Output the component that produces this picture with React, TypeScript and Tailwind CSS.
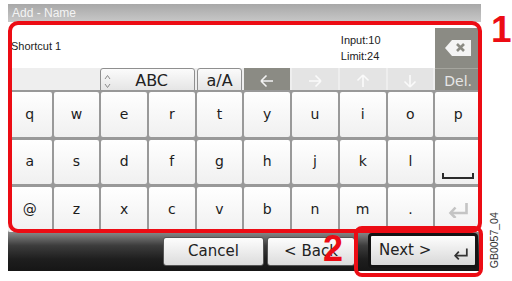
import React from "react";

const RED = "#ec0c14";

function Arrow({ dir, color }: { dir: "left" | "right" | "up" | "down"; color: string }) {
  const rot = { left: 0, right: 180, up: 90, down: 270 }[dir];
  return (
    <svg width="16" height="14" viewBox="0 0 16 14" style={{ transform: `rotate(${rot}deg)` }}>
      <path d="M2 7H14M2 7L7.5 1.5M2 7L7.5 12.5" stroke={color} strokeWidth="1.6" fill="none" />
    </svg>
  );
}

function EnterIcon({ w, h, color, sw }: { w: number; h: number; color: string; sw: number }) {
  return (
    <svg width={w} height={h} viewBox="0 0 22 16" fill="none">
      <path d="M19 1V11H3" stroke={color} strokeWidth={sw} />
      <path d="M8 5.5L3 11L8 16" stroke={color} strokeWidth={sw} />
    </svg>
  );
}

const rows = [
  ["q", "w", "e", "r", "t", "y", "u", "i", "o", "p"],
  ["a", "s", "d", "f", "g", "h", "j", "k", "l", "space"],
  ["@", "z", "x", "c", "v", "b", "n", "m", ".", "enter"],
];

const keyCls =
  "flex items-center justify-center rounded-[2px] bg-[linear-gradient(to_bottom,#ffffff,#f0f0f0)] text-[14px] text-[#1c1c1c]";

export default function App() {
  return (
    <div className="relative h-[281px] w-[512px] overflow-hidden bg-white font-['DejaVu_Sans',sans-serif]">
      <div className="ml-[8px] mt-[4px] flex h-[267px] w-[473px] flex-col">
        {/* title */}
        <div className="flex h-[18px] items-center bg-[linear-gradient(to_bottom,#a8a8a8,#c8c8c8)] pl-[4px] font-['Liberation_Sans',sans-serif] text-[12px] text-[#f4f4f4]">
          Add - Name
        </div>

        {/* input area */}
        <div className="grid h-[46px] grid-cols-[43.5px_repeat(9,1fr)] gap-x-[2px] bg-white font-['Liberation_Sans',sans-serif] text-[11px] text-[#222]">
          <div className="col-span-7 flex items-center pl-[3px] pt-[3px]">Shortcut 1</div>
          <div className="col-span-2 flex flex-col justify-center pl-[1px] pt-[6px] leading-[16px]">
            <span>Input:10</span>
            <span>Limit:24</span>
          </div>
          <div className="mt-[6px] flex items-center justify-center bg-[#8b8b84]">
            <svg width="26" height="16" viewBox="0 0 26 16">
              <path d="M7 0H26V16H7L0 8Z" fill="#f4f4f4" />
              <path d="M12 4L19 11M19 4L12 11" stroke="#8b8b84" strokeWidth="2.6" />
            </svg>
          </div>
        </div>

        {/* toolbar */}
        <div className="grid h-[22px] grid-cols-[43.5px_repeat(9,1fr)] gap-x-[2px] bg-[#eeeeee] text-[16px]">
          <div className="col-span-2" />
          <div className="col-span-2 -ml-[1px] flex items-center rounded-[3px] border border-[#8f8f8f] bg-[linear-gradient(to_bottom,#fbfbfb,#e2e2e2)] pl-[3px] text-[#222]">
            <svg width="7" height="15" viewBox="0 0 7 15" fill="none">
              <path d="M1 5L3.5 1.5L6 5M1 10L3.5 13.5L6 10" stroke="#8a8a8a" strokeWidth="1" />
            </svg>
            <span className="ml-[24px]">ABC</span>
          </div>
          <div className="flex items-center justify-center rounded-[3px] border border-[#8f8f8f] bg-[linear-gradient(to_bottom,#fbfbfb,#e2e2e2)] text-[#222]">
            a/A
          </div>
          <div className="flex items-center justify-center bg-[#8b8b84]">
            <Arrow dir="left" color="#f2f2f2" />
          </div>
          <div className="flex items-center justify-center bg-[#e4e4e4]">
            <Arrow dir="right" color="#fafafa" />
          </div>
          <div className="flex items-center justify-center bg-[#e4e4e4]">
            <Arrow dir="up" color="#fafafa" />
          </div>
          <div className="flex items-center justify-center bg-[#e4e4e4]">
            <Arrow dir="down" color="#fafafa" />
          </div>
          <div className="flex items-center justify-center border-t border-[#a5a59e] bg-[#8b8b84] text-[14px] text-[#e6e6e6]">
            Del.
          </div>
        </div>

        {/* keys */}
        <div className="grid h-[142px] grid-cols-[43.5px_repeat(9,1fr)] grid-rows-3 gap-x-[2px] gap-y-[3px] bg-[#999999] pt-[2px]">
          {rows.flat().map((k, i) => (
            <div key={i} className={keyCls}>
              {k === "space" ? (
                <svg width="32" height="6" viewBox="0 0 32 6" className="mt-[28px]">
                  <path d="M1 0V5H31V0" stroke="#2a2a2a" strokeWidth="2" fill="none" />
                </svg>
              ) : k === "enter" ? (
                <EnterIcon w={23} h={16} color="#c4c4c4" sw={2.6} />
              ) : (
                k
              )}
            </div>
          ))}
        </div>

        {/* bottom bar */}
        <div className="flex h-[39px] items-start bg-[linear-gradient(to_bottom,#8a8a8a_0%,#3c3c3c_35%,#1e1e1e_70%,#161616_100%)] pl-[155px] text-[15px] text-[#222]">
          <div className="mt-[5px] flex h-[29px] w-[101px] items-center justify-center rounded-[3px] border border-[#555] bg-[linear-gradient(to_bottom,#fdfdfd,#dcdcdc)]">
            Cancel
          </div>
          <div className="ml-[3px] mt-[5px] flex h-[29px] w-[88px] items-center justify-center rounded-[3px] border border-[#555] bg-[linear-gradient(to_bottom,#fdfdfd,#dcdcdc)]">
            &lt; Back
          </div>
          <div className="ml-[13px] mt-[1px] flex h-[35px] w-[110px] items-center rounded-[4px] border-[3px] border-[#141414] bg-[linear-gradient(to_bottom,#fdfdfd,#d8d8d8)] pl-[8px]">
            <span>Next &gt;</span>
            <span className="ml-[22px] mt-[6px]">
              <EnterIcon w={16} h={13} color="#333" sw={2.4} />
            </span>
          </div>
        </div>
      </div>

      {/* annotations */}
      <div className="absolute left-[8px] top-[21px] h-[212px] w-[474px] rounded-[10px] border-[4px]" style={{ borderColor: RED }} />
      <div className="absolute left-[354px] top-[226px] h-[51px] w-[129px] rounded-[8px] border-[4px]" style={{ borderColor: RED }} />
      <div className="absolute left-[491px] top-[11px] w-[20px] font-['Liberation_Sans',sans-serif] text-[37px] font-bold leading-none" style={{ color: RED }}>
        1
      </div>
      <div className="absolute left-[323px] top-[231px] font-['Liberation_Sans',sans-serif] text-[36px] font-bold leading-none" style={{ color: RED }}>
        2
      </div>
      <div className="absolute left-[466px] top-[235px] w-[56px] -rotate-90 text-center font-['Liberation_Sans',sans-serif] text-[10.5px] leading-none text-[#333]">
        GB0057_04
      </div>
    </div>
  );
}
